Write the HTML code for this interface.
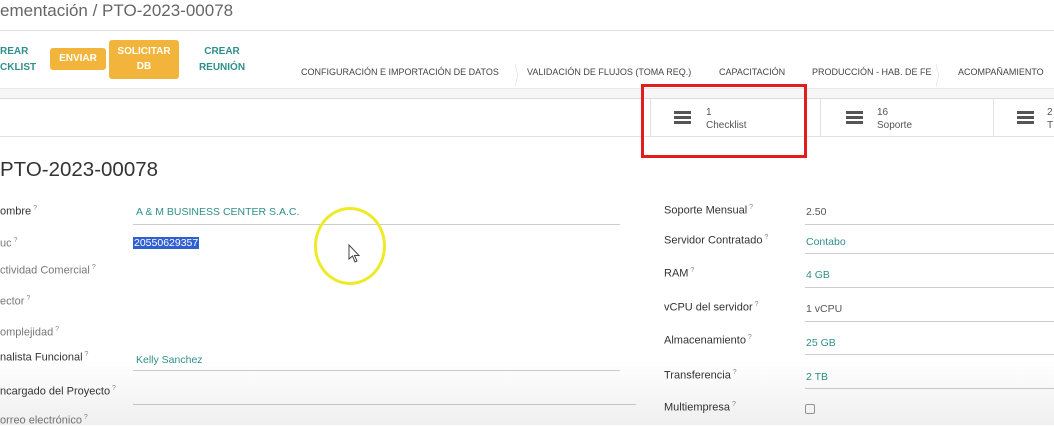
<!DOCTYPE html>
<html><head><meta charset="utf-8"><style>
*{margin:0;padding:0;box-sizing:border-box}
body{width:1054px;height:425px;overflow:hidden;background:#fff;font-family:"Liberation Sans",sans-serif;position:relative;color:#444}
.a{position:absolute;white-space:nowrap}
.teal{color:#2f8f8c}
.btn{position:absolute;background:#f2b43a;color:#fff;font-weight:bold;font-size:10px;text-align:center;border-radius:3px}
.st{position:absolute;top:67px;font-size:9px;color:#444}
.lbl{position:absolute;font-size:11px;color:#333}
.lbl sup{font-size:7px;color:#888}
.val{position:absolute;font-size:10.5px;color:#2f8f8c}
.ul{position:absolute;height:1px;background:#ccc}
.ham{position:absolute;width:17px;height:13px;border-top:3px solid #555;border-bottom:3px solid #555}
.ham:after{content:"";position:absolute;left:0;right:0;top:2px;height:3px;background:#555}
</style></head><body>
<div class="a" style="left:0;top:1px;font-size:17px;color:#666">ementación / PTO-2023-00078</div>
<div class="a" style="left:0;top:30px;width:1054px;height:1px;background:#e2e2e2"></div>
<div class="a teal" style="left:0;top:44px;font-size:10px;font-weight:bold;line-height:16px">REAR<br>CKLIST</div>
<div class="btn" style="left:50px;top:48px;width:56px;height:22px;line-height:22px">ENVIAR</div>
<div class="btn" style="left:109px;top:40px;width:70px;height:39px;padding-top:4px;line-height:15px">SOLICITAR<br>DB</div>
<div class="a teal" style="left:196px;top:44px;width:52px;text-align:center;font-size:10px;font-weight:bold;line-height:16px">CREAR<br>REUNIÓN</div>
<div class="st" style="left:301px">CONFIGURACIÓN E IMPORTACIÓN DE DATOS</div>
<div class="st" style="left:527px">VALIDACIÓN DE FLUJOS (TOMA REQ.)</div>
<div class="st" style="left:719px">CAPACITACIÓN</div>
<div class="st" style="left:812px">PRODUCCIÓN - HAB. DE FE</div>
<div class="st" style="left:958px">ACOMPAÑAMIENTO</div>
<div class="a" style="left:507px;top:56px;color:#e4e4e4;font-size:24px;transform:scaleX(.4)">〉</div>
<div class="a" style="left:928px;top:56px;color:#e4e4e4;font-size:24px;transform:scaleX(.4)">〉</div>
<div class="a" style="left:0;top:88px;width:1054px;height:11px;background:#f6f6f6;border-top:1px solid #e8e8e8;border-bottom:1px solid #dcdcdc"></div>
<div class="a" style="left:0;top:136px;width:1054px;height:1px;background:#e2e2e2"></div>
<div class="a" style="left:650px;top:99px;width:1px;height:37px;background:#e2e2e2"></div>
<div class="a" style="left:820px;top:99px;width:1px;height:37px;background:#e2e2e2"></div>
<div class="a" style="left:993px;top:99px;width:1px;height:37px;background:#e2e2e2"></div>
<div class="ham" style="left:674px;top:111px"></div>
<div class="ham" style="left:846px;top:111px"></div>
<div class="ham" style="left:1017px;top:111px"></div>
<div class="a" style="left:706px;top:106px;font-size:10px;line-height:13px;color:#555">1<br>Checklist</div>
<div class="a" style="left:877px;top:106px;font-size:10px;line-height:13px;color:#555">16<br>Soporte</div>
<div class="a" style="left:1047px;top:106px;font-size:10px;line-height:13px;color:#555">2<br>T</div>
<div class="a" style="left:641px;top:84px;width:166px;height:74px;border:3px solid #e21d1d"></div>
<div class="a" style="left:0;top:158px;font-size:20.5px;color:#333">PTO-2023-00078</div>
<div class="lbl" style="left:0;top:205px">ombre<sup> ?</sup></div>
<div class="val" style="left:136px;top:206px">A &amp; M BUSINESS CENTER S.A.C.</div>
<div class="ul" style="left:133px;top:224px;width:487px"></div>
<div class="lbl" style="left:0;top:237px;color:#777">uc<sup> ?</sup></div>
<div class="a" style="left:133px;top:237px;font-size:10.5px;background:#2f5fd0;color:#fff;padding:0 1px">20550629357</div>
<div class="lbl" style="left:0;top:264px;color:#777">ctividad Comercial<sup> ?</sup></div>
<div class="lbl" style="left:0;top:295px;color:#777">ector<sup> ?</sup></div>
<div class="lbl" style="left:0;top:326px;color:#777">omplejidad<sup> ?</sup></div>
<div class="lbl" style="left:0;top:351px">nalista Funcional<sup> ?</sup></div>
<div class="val" style="left:136px;top:354px">Kelly Sanchez</div>
<div class="ul" style="left:133px;top:370px;width:487px"></div>
<div class="lbl" style="left:0;top:385px">ncargado del Proyecto<sup> ?</sup></div>
<div class="ul" style="left:133px;top:404px;width:503px"></div>
<div class="lbl" style="left:0;top:414px;color:#777">orreo electrónico<sup> ?</sup></div>
<div class="a" style="left:314px;top:207px;width:72px;height:78px;border:3px solid #eeea2a;border-radius:50%"></div>
<svg class="a" style="left:348px;top:244px" width="14" height="20" viewBox="0 0 14 20"><path d="M1 1 L1 15 L4.5 12 L7 18 L9 17 L6.5 11.5 L11 11.5 Z" fill="#fff" stroke="#444" stroke-width="1"/></svg>
<div class="lbl" style="left:664px;top:204px">Soporte Mensual<sup> ?</sup></div>
<div class="val" style="left:806px;top:206px;color:#555">2.50</div>
<div class="ul" style="left:805px;top:224px;width:249px"></div>
<div class="lbl" style="left:664px;top:234px">Servidor Contratado<sup> ?</sup></div>
<div class="val" style="left:806px;top:236px">Contabo</div>
<div class="ul" style="left:805px;top:253px;width:249px"></div>
<div class="lbl" style="left:664px;top:267px">RAM<sup> ?</sup></div>
<div class="val" style="left:806px;top:269px">4 GB</div>
<div class="ul" style="left:805px;top:287px;width:249px"></div>
<div class="lbl" style="left:664px;top:301px">vCPU del servidor<sup> ?</sup></div>
<div class="val" style="left:806px;top:303px;color:#555">1 vCPU</div>
<div class="ul" style="left:805px;top:321px;width:249px"></div>
<div class="lbl" style="left:664px;top:334px">Almacenamiento<sup> ?</sup></div>
<div class="val" style="left:806px;top:337px">25 GB</div>
<div class="ul" style="left:805px;top:354px;width:249px"></div>
<div class="lbl" style="left:664px;top:369px">Transferencia<sup> ?</sup></div>
<div class="val" style="left:806px;top:371px">2 TB</div>
<div class="ul" style="left:805px;top:388px;width:249px"></div>
<div class="lbl" style="left:664px;top:401px">Multiempresa<sup> ?</sup></div>
<div class="a" style="left:805px;top:404px;width:10px;height:10px;border:1px solid #999;border-radius:2px"></div>
<div class="a" style="left:0;top:360px;width:1054px;height:65px;background:linear-gradient(#fff0,#00000010);pointer-events:none"></div>
</body></html>
